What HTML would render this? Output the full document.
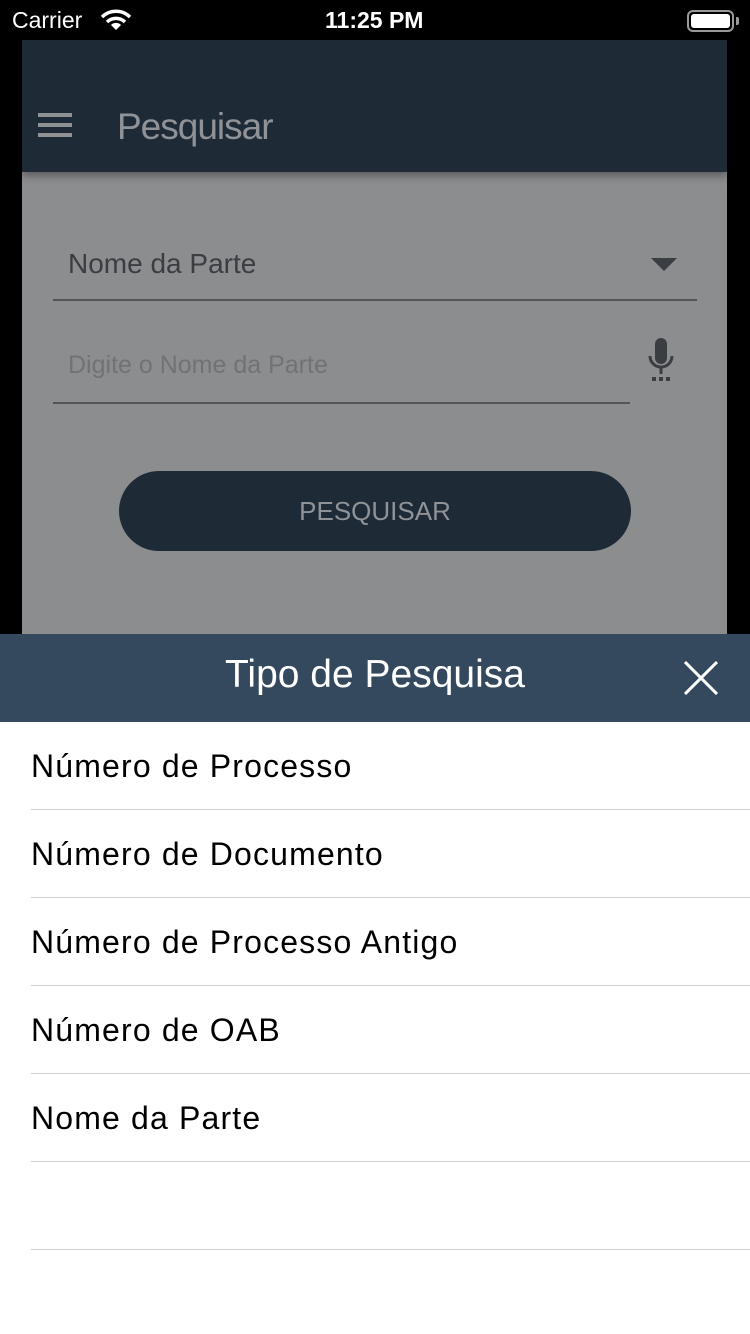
<!DOCTYPE html>
<html><head><meta charset="utf-8"><style>
*{margin:0;padding:0;box-sizing:border-box}
body{width:750px;height:1334px;background:#000;font-family:"Liberation Sans",sans-serif;position:relative;overflow:hidden}
.sb{position:absolute;top:0;left:0;width:750px;height:40px;color:#fff;font-size:23px}
.card{position:absolute;left:22px;top:40px;width:705px;height:600px;background:#8c8d8f}
.top{position:absolute;left:0;top:0;width:705px;height:132px;background:#1f2a37;box-shadow:0 4px 8px rgba(0,0,0,.35)}
.ham{position:absolute;left:16px;width:34px;height:4px;background:#8f9193}
.row{position:absolute;left:0;width:750px;height:88px;border-bottom:1px solid #d0d0d4;font-size:32px;letter-spacing:1.16px;color:#000;line-height:88px;padding-left:31px;background:#fff}
</style></head><body>
<div class="sb">
<span style="position:absolute;left:12px;top:7px">Carrier</span>
<svg style="position:absolute;left:100px;top:9px" width="32" height="22" viewBox="0 0 32 22"><path d="M2 8 A20 20 0 0 1 30 8" stroke="#fff" stroke-width="3.5" fill="none"/><path d="M7 13 A13 13 0 0 1 25 13" stroke="#fff" stroke-width="3.5" fill="none"/><path d="M16 21 L11 16 A7 7 0 0 1 21 16 Z" fill="#fff"/></svg>
<span style="position:absolute;left:325px;top:7px;font-weight:bold">11:25 PM</span>
<div style="position:absolute;left:687px;top:10px;width:47px;height:22px;border:2px solid #999;border-radius:6px;padding:2px"><div style="width:100%;height:100%;background:#fff;border-radius:3px"></div></div>
<div style="position:absolute;left:736px;top:17px;width:3px;height:8px;background:#999;border-radius:0 2px 2px 0"></div>
</div>
<div class="card">
<div class="top">
<div class="ham" style="top:73px"></div><div class="ham" style="top:83px"></div><div class="ham" style="top:93px"></div>
<div style="position:absolute;left:95px;top:66px;font-size:37px;color:#8f9296;letter-spacing:-1px">Pesquisar</div>
</div>
<div style="position:absolute;left:46px;top:208px;font-size:28px;color:#3a3d42">Nome da Parte</div>
<div style="position:absolute;left:629px;top:218px;width:0;height:0;border-left:13px solid transparent;border-right:13px solid transparent;border-top:13px solid #3a3d42"></div>
<div style="position:absolute;left:31px;top:259px;width:644px;height:2px;background:#555"></div>
<div style="position:absolute;left:46px;top:311px;font-size:25px;color:#707275">Digite o Nome da Parte</div>
<svg style="position:absolute;left:624px;top:298px" width="30" height="46" viewBox="0 0 30 46"><rect x="9" y="0" width="12" height="26" rx="6" fill="#3a3d42"/><path d="M4 18 A11 11 0 0 0 26 18" stroke="#3a3d42" stroke-width="3" fill="none"/><rect x="13.5" y="28" width="3" height="8" fill="#3a3d42"/><rect x="6" y="39" width="4" height="4" fill="#3a3d42"/><rect x="13" y="39" width="4" height="4" fill="#3a3d42"/><rect x="20" y="39" width="4" height="4" fill="#3a3d42"/></svg>
<div style="position:absolute;left:31px;top:362px;width:577px;height:2px;background:#555"></div>
<div style="position:absolute;left:97px;top:431px;width:512px;height:80px;border-radius:40px;background:#1f2a37;color:#8f9296;font-size:26px;text-align:center;line-height:80px">PESQUISAR</div>
</div>
<div style="position:absolute;left:0;top:634px;width:750px;height:88px;background:#34495e;color:#fff">
<div style="position:absolute;left:0;width:750px;text-align:center;top:19px;font-size:39px;letter-spacing:0px">Tipo de Pesquisa</div>
<svg style="position:absolute;left:684px;top:27px" width="34" height="34" viewBox="0 0 34 34"><path d="M1 1L33 33M33 1L1 33" stroke="#fff" stroke-width="3"/></svg>
</div>
<div style="position:absolute;left:0;top:722px;width:750px;height:612px;background:#fff"></div>
<div class="row" style="top:722px">Número de Processo</div>
<div class="row" style="top:810px">Número de Documento</div>
<div class="row" style="top:898px">Número de Processo Antigo</div>
<div class="row" style="top:986px">Número de OAB</div>
<div class="row" style="top:1074px">Nome da Parte</div>
<div class="row" style="top:1162px"></div>
<div style="position:absolute;left:0;top:722px;width:31px;height:612px;background:#fff"></div>
</body></html>
